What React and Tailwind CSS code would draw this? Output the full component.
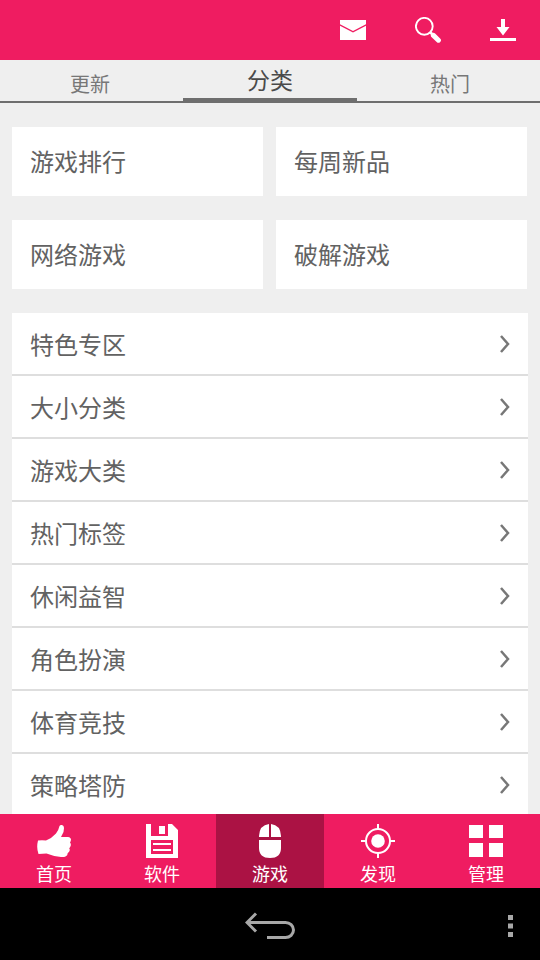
import { useState } from 'react';

const tabs = ['更新', '分类', '热门'];
const shortcuts = ['游戏排行', '每周新品', '网络游戏', '破解游戏'];
const categories = ['特色专区', '大小分类', '游戏大类', '热门标签', '休闲益智', '角色扮演', '体育竞技', '策略塔防'];

function MailIcon() {
  return (
    <svg className="w-[26px] h-5" viewBox="0 0 26 20" fill="currentColor" aria-hidden="true">
      <path d="M0 0h26v4.200L13 11 0 4.200z" />
      <path d="M0 5.800l13 6.700 13-6.700V20H0z" />
    </svg>
  );
}

function SearchIcon() {
  return (
    <svg className="w-[26px] h-[26px]" viewBox="0 0 26 26" fill="none" stroke="currentColor" aria-hidden="true">
      <circle cx="9.3" cy="9.3" r="8.4" strokeWidth="1.9" />
      <path d="M15 15l3 3" strokeWidth="2.6" />
      <path d="M18.4 18.4l5 4.800" strokeWidth="5" strokeLinecap="round" />
    </svg>
  );
}

function DownloadIcon() {
  return (
    <svg className="w-[26px] h-[22px]" viewBox="0 0 26 22" fill="currentColor" aria-hidden="true">
      <path d="M11 0h4v8h4.500L13 16.500 6.500 8H11z" />
      <path d="M0 19h26v3H0z" />
    </svg>
  );
}

function ThumbIcon() {
  return (
    <svg className="w-[34px] h-[34px]" viewBox="0 0 34 34" fill="currentColor" aria-hidden="true">
      <path d="M1 16.500Q5 16 9 16.500Q14.500 14.500 19 9.500Q21.500 6.500 22.500 2Q23.200 .6 25 1Q27 1.500 27 4L26.500 8L24 13L31 13Q34 13.500 34 15.800Q33.800 17.500 33 18.500Q34.300 20 33.600 22Q33.200 23.500 32.200 24.200Q33.200 25.500 32.400 27.200Q31.800 28.500 30.700 29Q30.800 31.500 28.500 32.500Q27 33.200 24 33Q17 32.500 9.500 29.500L1.500 30Q-.8 24 1 16.500z" />
    </svg>
  );
}

function FloppyIcon() {
  return (
    <svg className="w-[34px] h-[34px]" viewBox="0 0 34 34" fill="currentColor" aria-hidden="true">
      <path fillRule="evenodd" d="M1 0h5v12h17V0h4l6 6v28H1zM6 16v14h22V16z" />
      <path d="M14 2h6v8h-6zM8 19h18v2H8zM8 25h18v2H8z" />
    </svg>
  );
}

function MouseIcon() {
  return (
    <svg className="w-[34px] h-[34px]" viewBox="0 0 34 34" fill="currentColor" aria-hidden="true">
      <path d="M16 0v13H6v-1Q6.500 1 16 0zM18 0v13h10v-1Q27.500 1 18 0zM6 16h22v8q0 10-11 10T6 24z" />
    </svg>
  );
}

function TargetIcon() {
  return (
    <svg className="w-[34px] h-[34px]" viewBox="0 0 34 34" fill="none" stroke="currentColor" strokeWidth="2" aria-hidden="true">
      <circle cx="17" cy="17" r="12" />
      <circle cx="17" cy="17" r="6.800" fill="currentColor" stroke="none" />
      <path d="M17 0v5M17 29v5M0 17h5M29 17h5" />
    </svg>
  );
}

function GridIcon() {
  return (
    <svg className="w-[34px] h-[34px]" viewBox="0 0 34 34" fill="currentColor" aria-hidden="true">
      <path d="M0 1h14v13H0zM20 1h14v13H20zM0 19h14v14H0zM20 19h14v14H20z" />
    </svg>
  );
}

const navItems = [
  { id: 'home', label: '首页', icon: ThumbIcon },
  { id: 'apps', label: '软件', icon: FloppyIcon },
  { id: 'games', label: '游戏', icon: MouseIcon },
  { id: 'discover', label: '发现', icon: TargetIcon },
  { id: 'manage', label: '管理', icon: GridIcon },
];

export default function App() {
  const [tab, setTab] = useState('分类');
  const [section, setSection] = useState('games');

  return (
    <div className="flex h-screen flex-col bg-[#efefef] text-[#626262] font-['Noto_Sans_CJK_SC',sans-serif]">
      <header className="flex h-15 shrink-0 items-center justify-end gap-[49px] bg-[#ef1c61] pr-6 text-white">
        <button aria-label="消息"><MailIcon /></button>
        <button aria-label="搜索"><SearchIcon /></button>
        <button aria-label="下载"><DownloadIcon /></button>
      </header>

      <nav className="grid h-[43px] shrink-0 grid-cols-3 border-b-2 border-[#6e6e6e]">
        {tabs.map((name) => (
          <button
            key={name}
            onClick={() => setTab(name)}
            className={
              name === tab
                ? 'mx-[3px] border-b-3 border-[#6e6e6e] text-[23px] leading-[38px] text-[#4a4a4a]'
                : 'mx-[3px] pt-[6px] text-[20px] leading-[35px] text-[#777777]'
            }
          >
            {name}
          </button>
        ))}
      </nav>

      <main className="min-h-0 flex-1 overflow-y-auto px-3 pt-6 [scrollbar-width:none]">
        <div className="mr-px grid grid-cols-2 gap-x-[13px] gap-y-6">
          {shortcuts.map((name) => (
            <button key={name} className="h-[69px] bg-white px-[18px] pb-[2px] text-left text-[24px]">
              {name}
            </button>
          ))}
        </div>

        <ul className="mt-6 divide-y-2 divide-[#dedede] bg-white">
          {categories.map((name) => (
            <li key={name}>
              <button className="flex h-[61px] w-full items-center justify-between px-[18px] text-left text-[24px]">
                {name}
                <svg className="h-[18px] w-[10px] text-[#777777]" viewBox="0 0 10 18" fill="none" stroke="currentColor" strokeWidth="2.500" aria-hidden="true">
                  <path d="M1 1L8 9 1 17" />
                </svg>
              </button>
            </li>
          ))}
        </ul>
      </main>

      <nav className="grid h-[74px] shrink-0 grid-cols-5 bg-[#ef1c61] text-white">
        {navItems.map((item) => (
          <button
            key={item.id}
            onClick={() => setSection(item.id)}
            className={
              item.id === section
                ? 'flex flex-col items-center bg-[#ab1244] pt-[10px] text-[18px] leading-[30px]'
                : 'flex flex-col items-center pt-[10px] text-[18px] leading-[30px]'
            }
          >
            <item.icon />
            {item.label}
          </button>
        ))}
      </nav>

      <footer className="grid h-18 shrink-0 grid-cols-3 items-center bg-black pt-1 text-[#a8a8a8]">
        <button aria-label="返回" className="col-start-2 justify-self-center">
          <svg className="h-[28px] w-[50px]" viewBox="0 0 50 28" fill="none" stroke="currentColor" strokeWidth="3" aria-hidden="true">
            <path d="M11 1.500L2 10.500 11 19.500M2 10.500H40.500a8 7.500 0 0 1 0 15H22" />
          </svg>
        </button>
        <button aria-label="更多" className="mr-[27px] justify-self-end">
          <svg className="h-[22px] w-[5px]" viewBox="0 0 5 22" fill="currentColor" aria-hidden="true">
            <path d="M0 0h5v5H0zM0 8.500h5v5H0zM0 17h5v5H0z" />
          </svg>
        </button>
      </footer>
    </div>
  );
}
